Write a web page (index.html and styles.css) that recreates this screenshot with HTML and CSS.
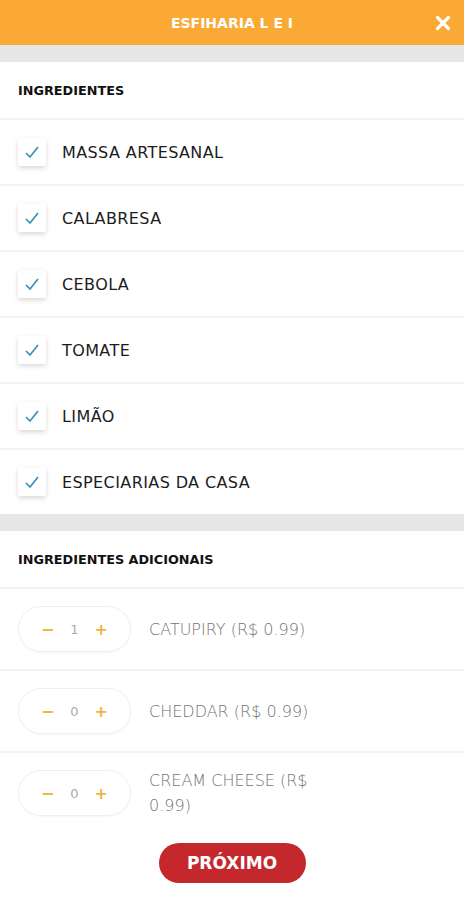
FILE: index.html
```html
<!DOCTYPE html>
<html lang="pt-BR">
<head>
    <meta charset="UTF-8">
    <meta name="viewport" content="width=device-width, initial-scale=1.0">
    <title>Esfiharia L E I</title>
    <link rel="stylesheet" href="styles.css">
</head>
<body>
    <header class="topbar">
        <span></span>
        <h1 class="topbar-title">ESFIHARIA L E I</h1>
        <button class="close-btn" aria-label="Fechar">
            <svg width="16" height="16" viewBox="0 0 16 16"><path d="M2.5 2.5 L13.5 13.5 M13.5 2.5 L2.5 13.5" stroke="#fff" stroke-width="3.2" stroke-linecap="round"/></svg>
        </button>
    </header>

    <div class="band"></div>

    <section class="group">
        <h2 class="group-title">INGREDIENTES</h2>
        <label class="check-row"><span class="box"><svg width="16" height="14" viewBox="0 0 16 14"><path d="M2 8 L6 12 L14 2" fill="none" stroke="#3b8fc2" stroke-width="1.7"/></svg></span>MASSA ARTESANAL</label>
        <label class="check-row"><span class="box"><svg width="16" height="14" viewBox="0 0 16 14"><path d="M2 8 L6 12 L14 2" fill="none" stroke="#3b8fc2" stroke-width="1.7"/></svg></span>CALABRESA</label>
        <label class="check-row"><span class="box"><svg width="16" height="14" viewBox="0 0 16 14"><path d="M2 8 L6 12 L14 2" fill="none" stroke="#3b8fc2" stroke-width="1.7"/></svg></span>CEBOLA</label>
        <label class="check-row"><span class="box"><svg width="16" height="14" viewBox="0 0 16 14"><path d="M2 8 L6 12 L14 2" fill="none" stroke="#3b8fc2" stroke-width="1.7"/></svg></span>TOMATE</label>
        <label class="check-row"><span class="box"><svg width="16" height="14" viewBox="0 0 16 14"><path d="M2 8 L6 12 L14 2" fill="none" stroke="#3b8fc2" stroke-width="1.7"/></svg></span>LIMÃO</label>
        <label class="check-row last"><span class="box"><svg width="16" height="14" viewBox="0 0 16 14"><path d="M2 8 L6 12 L14 2" fill="none" stroke="#3b8fc2" stroke-width="1.7"/></svg></span>ESPECIARIAS DA CASA</label>
    </section>

    <div class="band"></div>

    <section class="group">
        <h2 class="group-title">INGREDIENTES ADICIONAIS</h2>
        <div class="addon-row">
            <div class="stepper"><span class="step">&minus;</span><span class="qty">1</span><span class="step">+</span></div>
            <span class="addon-name">CATUPIRY (R$ 0.99)</span>
        </div>
        <div class="addon-row">
            <div class="stepper"><span class="step">&minus;</span><span class="qty">0</span><span class="step">+</span></div>
            <span class="addon-name">CHEDDAR (R$ 0.99)</span>
        </div>
        <div class="addon-row last">
            <div class="stepper"><span class="step">&minus;</span><span class="qty">0</span><span class="step">+</span></div>
            <span class="addon-name">CREAM CHEESE (R$ 0.99)</span>
        </div>
    </section>

    <div class="actions">
        <button class="next-btn">PRÓXIMO</button>
    </div>
</body>
</html>
```

FILE: styles.css
```css
body {
    margin: 0;
    font-family: "DejaVu Sans", "Open Sans", sans-serif;
    background-color: #fff;
    color: #222;
}
.topbar {
    height: 45px;
    background-color: #f9a934;
    display: grid;
    grid-template-columns: 1fr auto 1fr;
    align-items: center;
}
.topbar-title {
    margin: 0;
    color: #fff;
    font-size: 14px;
    font-weight: bold;
}
.close-btn {
    justify-self: end;
    margin-right: 13px;
    background: none;
    border: none;
    padding: 0;
    display: flex;
    cursor: pointer;
}
.band {
    height: 17px;
    background-color: #e6e6e6;
}
.group-title {
    margin: 0;
    height: 56px;
    display: flex;
    align-items: center;
    padding-left: 18px;
    font-size: 12.8px;
    font-weight: bold;
    color: #111;
    border-bottom: 2px solid #f3f3f3;
}
.check-row {
    height: 64px;
    display: flex;
    align-items: center;
    gap: 16px;
    padding-left: 18px;
    font-size: 16px;
    letter-spacing: 0.4px;
    color: #1c1c1c;
    border-bottom: 2px solid #f3f3f3;
}
.check-row.last {
    border-bottom: none;
}
.box {
    width: 28px;
    height: 28px;
    background-color: #fff;
    border-radius: 2px;
    box-shadow: 0 2px 5px rgba(0, 0, 0, 0.16);
    display: flex;
    align-items: center;
    justify-content: center;
}
.addon-row {
    min-height: 80px;
    display: flex;
    align-items: center;
    gap: 18px;
    padding-left: 18px;
    border-bottom: 2px solid #f3f3f3;
}
.addon-row.last {
    border-bottom: none;
}
.stepper {
    flex: none;
    width: 111px;
    height: 44px;
    border: 1px solid #efefef;
    border-radius: 23px;
    display: flex;
    align-items: center;
    justify-content: center;
    gap: 15px;
    box-shadow: 0 1px 2px rgba(0, 0, 0, 0.04);
}
.step {
    color: #ecb73c;
    font-size: 16px;
    font-weight: bold;
}
.qty {
    color: #aaa;
    font-size: 13px;
    width: 10px;
    text-align: center;
}
.addon-name {
    width: 175px;
    font-size: 16px;
    font-weight: 300;
    color: #737373;
    line-height: 25px;
}
.actions {
    display: flex;
    justify-content: center;
    padding-top: 10px;
}
.next-btn {
    width: 147px;
    height: 40px;
    border: none;
    border-radius: 20px;
    background-color: #c4282d;
    color: #fff;
    font-family: inherit;
    font-size: 17px;
    font-weight: bold;
    cursor: pointer;
}
```
